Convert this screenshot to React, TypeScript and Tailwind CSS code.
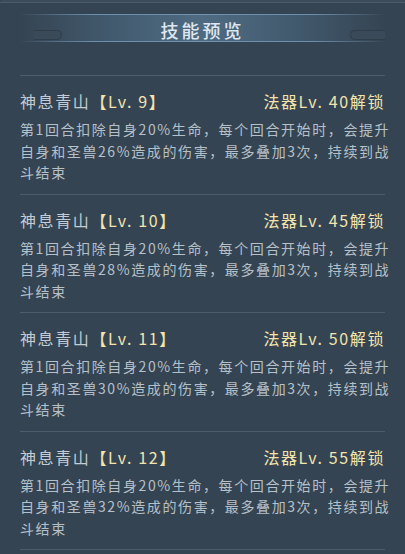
import React from "react";

const skills = [
  { lv: 9, unlock: 40, pct: 26 },
  { lv: 10, unlock: 45, pct: 28 },
  { lv: 11, unlock: 50, pct: 30 },
  { lv: 12, unlock: 55, pct: 32 },
];

function SkillRow({ lv, unlock, pct }: { lv: number; unlock: number; pct: number }) {
  return (
    <div className="border-t border-[#4b5c6b] pt-[14px] pb-[10px]">
      <div className="flex items-center justify-between leading-[22px] text-[16px] tracking-[1.6px]">
        <div>
          <span className="text-[#c3ccd4]">神息青山</span>
          <span className="text-[#f3e4ad]">【Lv. {lv}】</span>
        </div>
        <span className="text-[#f3e4ad]">法器Lv. {unlock}解锁</span>
      </div>
      <p className="mt-[7px] w-[378px] text-[14px] leading-[21.5px] tracking-[1.6px] text-[#b6c0c9]">
        第1回合扣除自身20%生命，每个回合开始时，会提升自身和圣兽{pct}%造成的伤害，最多叠加3次，持续到战斗结束
      </p>
    </div>
  );
}

export default function App() {
  return (
    <div
      className="w-[405px] h-[554px] overflow-hidden bg-[#354452]"
      style={{ fontFamily: '"Noto Sans CJK SC", "Noto Sans", sans-serif' }}
    >
      {/* top frame edge */}
      <div className="h-[3px] border-b border-[#4a5b6a] bg-[#3d4c5a] rounded-tl-[6px] rounded-tr-[6px]" />

      {/* header band */}
      <div className="mt-[11px] mx-[20px] h-[28px] grid grid-cols-[1fr_auto_1fr] items-center border-y [border-image:linear-gradient(90deg,transparent,#6a8ead_20%,#6f93b0_50%,#6a8ead_80%,transparent)_1] bg-[linear-gradient(90deg,rgba(53,68,82,1)_0%,#425a6e_25%,#4f6b82_50%,#425a6e_75%,rgba(53,68,82,1)_100%)]">
        <div className="self-end mb-[2px] ml-[14px] w-[28px] h-[10px] rounded-r-full border border-l-0 border-[#2f3d49] bg-[#3a4a58]" />
        <span className="pt-[3px] text-[18px] leading-[24px] tracking-[3px] font-medium text-[#dfe7ef]">技能预览</span>
        <div className="justify-self-end self-end mb-[2px] w-[35px] h-[10px] rounded-l-full border border-r-0 border-[#2f3d49] bg-[#3a4a58]" />
      </div>

      <div className="mt-[33px] px-[20px]">
        {skills.map((s) => (
          <SkillRow key={s.lv} {...s} />
        ))}
        <div className="border-t border-[#4b5c6b]" />
      </div>
    </div>
  );
}
